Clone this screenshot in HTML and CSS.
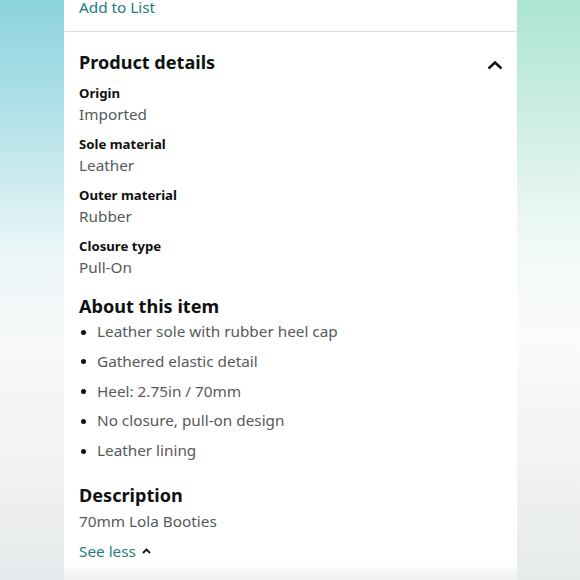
FILE: index.html
```html
<!DOCTYPE html>
<html lang="en">
<head>
<meta charset="utf-8">
<title>Product details</title>
<link rel="stylesheet" href="styles.css">
</head>
<body>
<div class="side side-left"></div>
<main class="panel">
  <div class="top-link">Add to List</div>
  <hr class="divider">
  <section class="section">
    <div class="section-head">
      <h2 class="title">Product details</h2>
      <svg class="chev" width="16" height="10" viewBox="0 0 16 10" aria-hidden="true">
        <polyline points="1.5,8.5 8,2.5 14.5,8.5" fill="none" stroke="#0f1111" stroke-width="2.4"/>
      </svg>
    </div>
    <dl class="details">
      <div class="pair"><dt>Origin</dt><dd>Imported</dd></div>
      <div class="pair"><dt>Sole material</dt><dd>Leather</dd></div>
      <div class="pair"><dt>Outer material</dt><dd>Rubber</dd></div>
      <div class="pair"><dt>Closure type</dt><dd>Pull-On</dd></div>
    </dl>
    <h2 class="title about">About this item</h2>
    <ul class="bullets">
      <li>Leather sole with rubber heel cap</li>
      <li>Gathered elastic detail</li>
      <li>Heel: 2.75in / 70mm</li>
      <li>No closure, pull-on design</li>
      <li>Leather lining</li>
    </ul>
    <h2 class="title desc">Description</h2>
    <p class="desc-text">70mm Lola Booties</p>
    <div class="see-less">See less
      <svg class="chev-small" width="9" height="6" viewBox="0 0 9 6" aria-hidden="true">
        <polyline points="1,5 4.5,1.5 8,5" fill="none" stroke="#0f1111" stroke-width="1.8"/>
      </svg>
    </div>
  </section>
</main>
<div class="side side-right"></div>
</body>
</html>
```
FILE: styles.css
```css
* { box-sizing: border-box; }
html, body { margin: 0; padding: 0; }
body {
  width: 580px;
  height: 580px;
  overflow: hidden;
  display: flex;
  font-family: "Noto Sans", "Open Sans", sans-serif;
  color: #0f1111;
  background: #fff;
}
.side { height: 580px; }
.side-left {
  width: 64px;
  background: linear-gradient(to bottom, #8bd3de 0%, #b7e3ea 22%, #eef7f8 45%, #f7f8f9 60%, #eef0f1 85%, #e6e9eb 100%);
}
.side-right {
  width: 63px;
  background: linear-gradient(to bottom, #ace4d2 0%, #cdeee2 20%, #f1f9f6 42%, #fafbfb 58%, #f0f2f3 80%, #e7eaeb 100%);
}
.panel {
  width: 453px;
  height: 580px;
  overflow: hidden;
  background: linear-gradient(to bottom, #ffffff 0%, #ffffff 97.4%, #f4f5f6 98.8%, #f0f1f2 100%);
}
.top-link {
  margin-top: -5px;
  padding: 0 15px;
  height: 24px;
  line-height: 24px;
  font-size: 15.3px;
  color: #237b82;
}
.divider {
  margin: 12px 0 0;
  border: 0;
  height: 1px;
  background: #dcdfe0;
}
.section { padding: 0 14px 0 15px; }
.section-head {
  display: flex;
  align-items: center;
  justify-content: space-between;
  margin-top: 18px;
}
.title {
  margin: 0;
  height: 24px;
  line-height: 24px;
  font-size: 18.1px;
  font-weight: 700;
}
.chev { margin-top: 6px; margin-right: 0; }
.details { margin: 9px 0 0; }
.pair { margin-bottom: 9px; }
.pair:last-child { margin-bottom: 0; }
.details dt {
  height: 20px;
  line-height: 20px;
  font-size: 13.2px;
  font-weight: 700;
}
.details dd {
  margin: 0;
  height: 22px;
  line-height: 22px;
  font-size: 15.3px;
  color: #565959;
}
.about { margin-top: 16px; }
.bullets {
  margin: -1px 0 0;
  padding: 0;
  list-style: none;
}
.bullets li {
  position: relative;
  height: 29.75px;
  line-height: 29.75px;
  padding-left: 18px;
  font-size: 15.3px;
  color: #565959;
}
.bullets li::before {
  content: "";
  position: absolute;
  left: 2px;
  top: 12.5px;
  width: 5px;
  height: 5px;
  border-radius: 50%;
  background: #0f1111;
}
.desc { margin-top: 17px; }
.desc-text {
  margin: 3px 0 0;
  height: 22px;
  line-height: 22px;
  font-size: 15.3px;
  color: #565959;
}
.see-less {
  margin-top: 8px;
  height: 22px;
  line-height: 22px;
  font-size: 15.3px;
  color: #237b82;
  display: flex;
  align-items: center;
  gap: 6px;
}
.chev-small { margin-top: 1px; }
```
